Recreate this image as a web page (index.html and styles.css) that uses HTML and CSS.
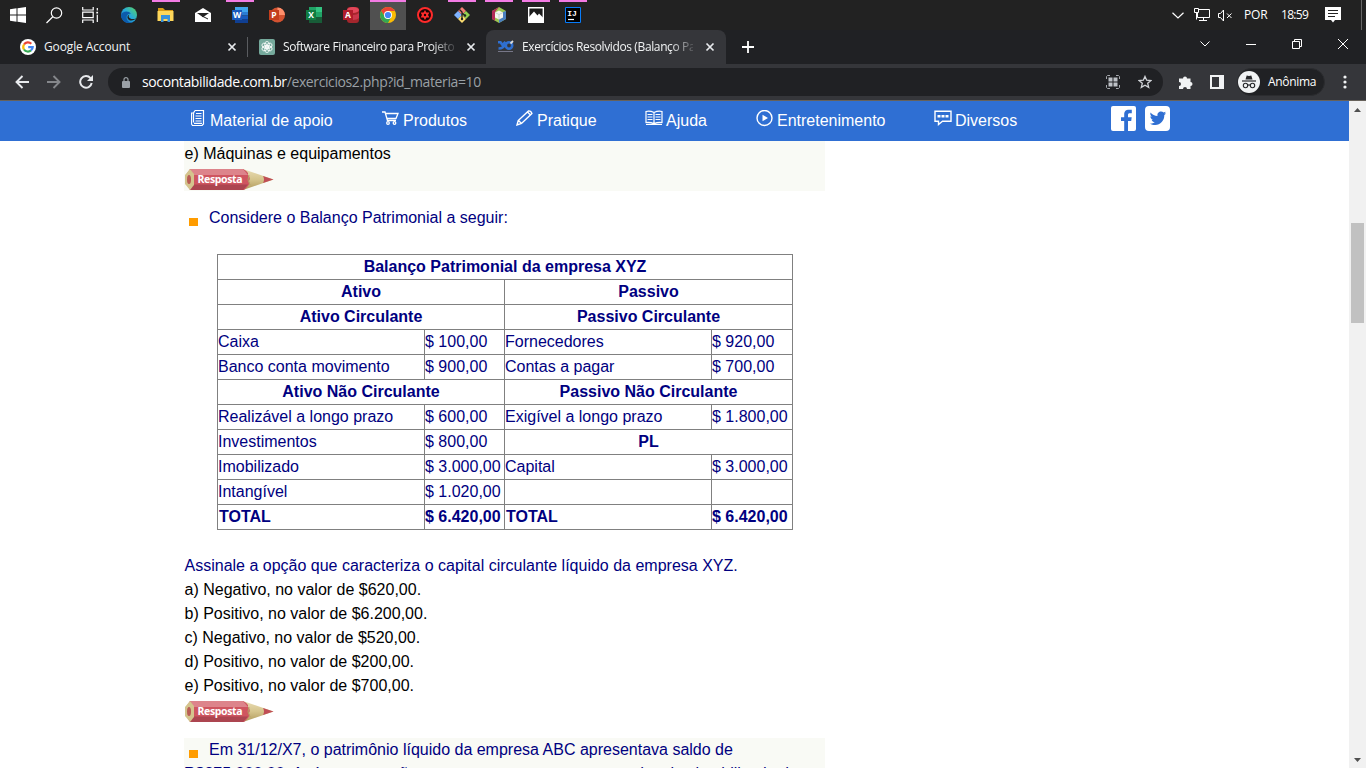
FILE: index.html
```html
<!DOCTYPE html>
<html lang="pt-BR">
<head>
<meta charset="utf-8">
<title>Exercícios Resolvidos (Balanço Patrimonial)</title>
<link rel="stylesheet" href="styles.css">
</head>
<body>
<svg class="defs" width="0" height="0">
  <defs>
    <linearGradient id="edge" x1="0" y1="1" x2="1" y2="0"><stop offset="0" stop-color="#1465b8"/><stop offset=".5" stop-color="#25a9dc"/><stop offset="1" stop-color="#5cd65c"/></linearGradient>
    <linearGradient id="wood" x1="0" y1="0" x2="0" y2="1"><stop offset="0" stop-color="#e9dcb4"/><stop offset=".5" stop-color="#d5c48c"/><stop offset="1" stop-color="#b09a5c"/></linearGradient>
    <symbol id="x" viewBox="0 0 10 10"><path d="M1.500 1.500l7 7M8.500 1.500l-7 7" stroke="#e8eaed" stroke-width="1.700"/></symbol>
    <symbol id="pencil" viewBox="0 0 90 22">
      <path d="M58 0L88.500 10.500 58 21z" fill="url(#wood)"/>
      <path d="M78 7l10.500 3.500-10.500 3.500q2-3.500 0-7z" fill="#c04e56"/>
      <path d="M5 0h53q6 3 5 6 3 3 1 6 2 3-5 9H5L1 14V6z" fill="#cf5560"/>
      <path d="M5 0h53l5 6H9z" fill="#dd848b"/>
      <path d="M8 15.500h55l-5 5.500H5z" fill="#ac4550"/>
      <path d="M5 0L0 6v9l5 6 4-5V5z" fill="#d4c48d"/>
      <ellipse cx="4" cy="10.500" rx="2" ry="4.500" fill="#b95d55"/>
      <path d="M64 6l-1 5 2 5" fill="none" stroke="#b39e62"/>
    </symbol>
  </defs>
</svg>

<header class="taskbar">
  <div class="slot sys"><svg width="16" height="16" viewBox="0 0 16 16"><path d="M0 2.200l6.500-.9v6.200H0zM7.500 1.200L16 0v7.500H7.500zM0 8.500h6.500v6.200L0 13.800zM7.500 8.500H16V16l-8.500-1.200z" fill="#fff"/></svg></div>
  <div class="slot sys"><svg width="17" height="17" viewBox="0 0 17 17" fill="none" stroke="#fff" stroke-width="1.200"><circle cx="10.500" cy="6" r="5.200"/><path d="M6.800 9.800L.5 16"/></svg></div>
  <div class="slot sys"><svg width="17" height="16" viewBox="0 0 17 16" fill="none" stroke="#fff" stroke-width="1.200"><path d="M.7 0v3h10.500V0M.7 16v-3h10.500v3M.7 5.200h10.500v5.500H.7zM15.300 1v14"/><path d="M13.700 4.200h3v3h-3z" fill="#fff" stroke="#222"/></svg></div>
  <div class="slot gap3"><svg width="16" height="16" viewBox="0 0 16 16"><circle cx="8" cy="8" r="8" fill="url(#edge)"/><path d="M0 8c1-4 8-5 10-1-4-1-6 4-3 7 2 2 5 2 7 0-5 5-14 1-14-6z" fill="#0c5bab"/><path d="M8.500 7.500c-2 2 0 5 4 4.500 1.500 0 2.500-.7 3-1.500-2 4-8 4-9 .5-.3-1.600.6-3 2-3.500z" fill="#222"/></svg></div>
  <div class="slot open"><svg width="17" height="16" viewBox="0 0 17 16"><path d="M1 1h5l2 2h8v3H1z" fill="#d99b16"/><path d="M.5 4h16v10H.5z" fill="#ffd75a"/><path d="M4 15V8h9v7h-2.500v-3h-4v3z" fill="#3a92db"/></svg></div>
  <div class="slot"><svg width="16" height="14" viewBox="0 0 16 14"><path d="M0 5l8-5 8 5v9H0z" fill="#fff"/><path d="M2 5h12L8 9.200z" fill="#222"/><path d="M7 8l6 3" stroke="#222"/></svg></div>
  <div class="slot open"><svg width="16" height="16" viewBox="0 0 16 16"><path d="M3 0h13v5H3z" fill="#41a5ee"/><path d="M3 5h13v3.500H3z" fill="#2b7cd3"/><path d="M3 8.500h13V12H3z" fill="#185abd"/><path d="M3 12h13v4H3z" fill="#103f91"/><path d="M0 3h10v10H0z" fill="#185abd"/><text x="5" y="11" class="appletter">W</text></svg></div>
  <div class="slot"><svg width="16" height="16" viewBox="0 0 16 16"><circle cx="8.500" cy="8" r="7.500" fill="#d35230"/><path d="M8.500.5A7.500 7.500 0 0116 8H8.500z" fill="#ff8f6b"/><path d="M0 3h10v10H0z" fill="#c43e1c"/><text x="5" y="11" class="appletter">P</text></svg></div>
  <div class="slot"><svg width="16" height="16" viewBox="0 0 16 16"><path d="M3 0h7v5H3z" fill="#21a366"/><path d="M10 0h6v5h-6z" fill="#33c481"/><path d="M3 5h13v6H3z" fill="#107c41"/><path d="M10 5h6v5h-6z" fill="#21a366"/><path d="M3 10h13v6H3z" fill="#185c37"/><path d="M0 3h10v10H0z" fill="#107c41"/><text x="5" y="11" class="appletter">X</text></svg></div>
  <div class="slot"><svg width="16" height="16" viewBox="0 0 16 16"><rect x="4" width="12" height="16" rx="3" fill="#a4262c"/><ellipse cx="10" cy="3" rx="6" ry="3" fill="#e2475a"/><path d="M10 8q4 0 6-2v5q-2 2-6 2z" fill="#c9364a"/><path d="M0 3h10v10H0z" fill="#b01c2b"/><text x="5" y="11" class="appletter">A</text></svg></div>
  <div class="slot open active"><svg width="16" height="16" viewBox="0 0 16 16"><circle cx="8" cy="8" r="8" fill="#fbbc05"/><path d="M1.100 4A8 8 0 0114.900 4H8L5 9.500z" fill="#ea4335"/><path d="M1.100 4A8 8 0 008 16l3.400-6-5.900.5z" fill="#34a853"/><circle cx="8" cy="8" r="4" fill="#fff"/><circle cx="8" cy="8" r="3.100" fill="#4285f4"/></svg></div>
  <div class="slot"><svg width="16" height="16" viewBox="0 0 16 16"><circle cx="8" cy="8" r="7" fill="#180505" stroke="#ff2b2b" stroke-width="2"/><path d="M8 3l1.400 2.500 3-.1L11 8l1.400 2.600-3-.1L8 13l-1.400-2.500-3 .1L5 8 3.600 5.400l3 .1z" fill="#ff2b2b"/><circle cx="8" cy="8" r="1.200" fill="#180505"/></svg></div>
  <div class="slot open"><svg width="16" height="16" viewBox="0 0 16 16"><path d="M8 0l4 4-4 4-4-4z" fill="#f27e74"/><path d="M4 4l4 4-4 4-4-4z" fill="#80b3ff"/><path d="M12 4l4 4-4 4-4-4z" fill="#92d050"/><path d="M8 8l4 4-4 4-4-4z" fill="#ffe071"/><path d="M5.500 2.500L8 5v7M8 6l3.500 3" fill="none" stroke="#222" stroke-width="1.300"/><circle cx="8" cy="12" r="1.200" fill="#222"/><circle cx="11" cy="8.500" r="1.200" fill="#222"/></svg></div>
  <div class="slot open"><svg width="16" height="16" viewBox="0 0 16 16"><path d="M8 0l7 4v8l-7 4-7-4V4z" fill="#9cc653"/><path d="M8 0L1 4v8l3 1.700V5z" fill="#b32a58"/><path d="M15 4v8l-7 4v-4l4-2V5z" fill="#4a7fc0"/><path d="M8 3.500l4 2v5l-4 2-4-2v-5z" fill="#f6f6ee"/><path d="M4 5.500l4 2 4-2M8 7.500v5" fill="none" stroke="#bcc" stroke-width=".8"/></svg></div>
  <div class="slot open"><svg width="16" height="16" viewBox="0 0 16 16"><path d="M.7.700h14.600v14.600H.7z" fill="#1b1b1b" stroke="#fff" stroke-width="1.400"/><path d="M1 10l5-5.500 3.500 4L11 6.500l4 4V15H1z" fill="#fff"/></svg></div>
  <div class="slot open"><svg width="16" height="16" viewBox="0 0 16 16"><path d="M.5.500h15v15H.5z" fill="#000" stroke="#087cfa"/><text x="7" y="9" class="ij">IJ</text><path d="M3 12.500h6" stroke="#fff" stroke-width="1.200"/></svg></div>
  <div class="tray">
    <svg class="t-chev" width="12" height="7" viewBox="0 0 12 7" fill="none" stroke="#fff" stroke-width="1.200"><path d="M.5.700L6 6 11.500.7"/></svg>
    <svg class="t-net" width="16" height="14" viewBox="0 0 16 14" fill="none" stroke="#fff"><path d="M5 1.500h10.500v8H3.500V5M9.500 9.500v3M5 12.500h8M.5.500h4v4h-4zM2.500 4.500v7"/></svg>
    <svg class="t-vol" width="15" height="13" viewBox="0 0 15 13" fill="none" stroke="#fff"><path d="M.5 4.500h2l3-3.500v11l-3-3.500h-2zM9 4.500l4.500 4.500M13.500 4.500L9 9"/></svg>
    <span class="lang">POR</span><span class="clock">18:59</span>
    <svg class="t-note" width="16" height="16" viewBox="0 0 16 16"><path d="M0 0h16v13h-6l-2 2.500L6 13H0z" fill="#fff"/><path d="M3 3.500h10M3 6.500h10M3 9.500h7" stroke="#222"/></svg>
  </div>
</header>

<div class="tabs">
  <div class="tab tab1">
    <svg width="16" height="16" viewBox="0 0 16 16"><circle cx="8" cy="8" r="8" fill="#fff"/><g fill="none" stroke-width="2.200"><path d="M4 5.500A4.700 4.700 0 0111.300 4.800" stroke="#ea4335"/><path d="M4 5.500a4.700 4.700 0 000 5" stroke="#fbbc05"/><path d="M4 10.500a4.700 4.700 0 007 .9" stroke="#34a853"/><path d="M11 11.400q1.600-1.300 1.700-3.200H8.200" stroke="#4285f4"/></g></svg>
    <span class="title">Google Account</span><svg class="close" width="10" height="10"><use href="#x"/></svg>
  </div>
  <div class="tab tab2">
    <svg width="16" height="16" viewBox="0 0 16 16"><rect width="16" height="16" rx="2" fill="#75a99c"/><g fill="none" stroke="#fff" stroke-width=".8"><ellipse cx="8" cy="5.800" rx="2.300" ry="3.400"/><ellipse cx="8" cy="5.800" rx="2.300" ry="3.400" transform="rotate(60 8 8)"/><ellipse cx="8" cy="5.800" rx="2.300" ry="3.400" transform="rotate(120 8 8)"/><ellipse cx="8" cy="5.800" rx="2.300" ry="3.400" transform="rotate(180 8 8)"/><ellipse cx="8" cy="5.800" rx="2.300" ry="3.400" transform="rotate(240 8 8)"/><ellipse cx="8" cy="5.800" rx="2.300" ry="3.400" transform="rotate(300 8 8)"/></g></svg>
    <span class="title fade">Software Financeiro para Projeto</span><svg class="close" width="10" height="10"><use href="#x"/></svg>
  </div>
  <div class="tab tab3">
    <svg width="16" height="16" viewBox="0 0 16 16" fill="none" stroke="#2f6fd0" stroke-width="2.600"><path d="M0 3.300h2.500l2 2.700 3-3.200M7 5.500c-1 2.500-3 4-6.500 4"/><circle cx="11" cy="6.500" r="3.200"/><path d="M12.500 4.500l2.500-2.500" stroke="#ddd" stroke-width="1.800"/><path d="M0 12.500h15" stroke="#778" stroke-width="1"/></svg>
    <span class="title fade">Exercícios Resolvidos (Balanço Pa</span><svg class="close" width="10" height="10"><use href="#x"/></svg>
  </div>
  <svg class="plus" width="12" height="12" viewBox="0 0 12 12"><path d="M6 0v12M0 6h12" stroke="#fff" stroke-width="1.800"/></svg>
  <div class="wincontrols">
    <span><svg width="10" height="6" viewBox="0 0 10 6" fill="none" stroke="#fff"><path d="M.5.500L5 5 9.500.5"/></svg></span>
    <span><svg width="10" height="1"><path d="M0 .5h10" stroke="#fff"/></svg></span>
    <span><svg width="10" height="10" viewBox="0 0 10 10" fill="none" stroke="#fff"><path d="M.5 2.500h7v7h-7zM2.500 2V.5h7v7H8"/></svg></span>
    <span><svg width="10" height="10" viewBox="0 0 10 10" stroke="#fff"><path d="M0 0l10 10M10 0L0 10"/></svg></span>
  </div>
</div>

<div class="toolbar">
  <span class="btn"><svg width="14" height="14" viewBox="0 0 14 14" fill="none" stroke="#e8eaed" stroke-width="1.900"><path d="M14 7H1.500M7.500 1l-6 6 6 6"/></svg></span>
  <span class="btn"><svg width="14" height="14" viewBox="0 0 14 14" fill="none" stroke="#85878b" stroke-width="1.900"><path d="M0 7h12.500M6.500 1l6 6-6 6"/></svg></span>
  <span class="btn"><svg width="14" height="14" viewBox="0 0 14 14" fill="none" stroke="#e8eaed" stroke-width="2"><path d="M11.500 3.200A5.800 5.800 0 1012.700 8"/><path d="M14 0v6H8z" fill="#e8eaed" stroke="none"/></svg></span>
  <div class="omnibox">
    <svg class="lock" width="8" height="11" viewBox="0 0 8 11"><rect y="4" width="8" height="7" rx="1" fill="#9aa0a6"/><path d="M2 4.500V2.600a2 2 0 014 0v1.900" fill="none" stroke="#9aa0a6" stroke-width="1.200"/></svg>
    <span class="url">socontabilidade.com.br<span class="path">/exercicios2.php?id_materia=10</span></span>
    <svg class="qr" width="14" height="14" viewBox="0 0 14 14" fill="none" stroke="#a5a8ad"><path d="M4 .5H1.500L.5 1.500V4M10 .5h2.500l1 1V4M4 13.500H1.500l-1-1V10M10 13.500h2.500l1-1V10"/><path d="M2.500 2.500h4v4h-4zM7.500 2.500h4v4h-4zM2.500 7.500h4v4h-4zM7.500 7.500h4v4h-4z" fill="#bdc1c6" stroke="none"/></svg>
    <svg class="star" width="14" height="14" viewBox="0 0 14 14"><path d="M7 1.400l1.700 3.800 4.200.4-3.200 2.700 1 4.100L7 10.200l-3.700 2.200 1-4.100L1.100 5.600l4.200-.4z" fill="none" stroke="#d0d3d7" stroke-width="1.300"/></svg>
  </div>
  <svg class="puzzle" width="15" height="15" viewBox="0 0 15 15"><path d="M1 3.500h4a2 2 0 114 0h3.500v3.500a2 2 0 110 4v3H9a2 2 0 00-4 0H1V11a2 2 0 000-4z" fill="#f1f3f4"/></svg>
  <svg class="panel" width="14" height="14" viewBox="0 0 14 14"><path d="M0 0h14v14H0zM2 2v10h7V2z" fill="#f1f3f4" fill-rule="evenodd"/></svg>
  <div class="incognito"><svg width="22" height="22" viewBox="0 0 22 22"><circle cx="11" cy="11" r="11" fill="#f1f3f4"/><path d="M7.500 8.500l1.200-4 2.300.6 2.300-.6 1.200 4z" fill="#27282b"/><path d="M4 10h14" stroke="#27282b" stroke-width="1.200"/><g fill="none" stroke="#27282b" stroke-width="1.100"><circle cx="7.500" cy="14.500" r="2.200"/><circle cx="14.500" cy="14.500" r="2.200"/><path d="M9.700 14.200q1.300-.7 2.600 0"/></g></svg><span>Anônima</span></div>
  <svg class="dots" width="4" height="14" viewBox="0 0 4 14" fill="#f1f3f4"><circle cx="2" cy="2" r="1.600"/><circle cx="2" cy="7" r="1.600"/><circle cx="2" cy="12" r="1.600"/></svg>
</div>

<div class="viewport">
  <div class="page">
    <nav class="menu">
      <a class="m1"><svg width="14" height="16" viewBox="0 0 14 16" fill="none" stroke="#fff"><path d="M4 .5h8.500v12M4 .5L2.500 3v9.500M2.500 3H.5v11l1 1.500H11l1.500-1.500v-2M5 3.500h5.500M4.500 6h6M4.500 8.500h6M4.500 11h6M3 13.300h8" stroke-width="1.200"/></svg><span>Material de apoio</span></a>
      <a class="m2"><svg width="17" height="16" viewBox="0 0 17 16" fill="none" stroke="#fff" stroke-width="1.300"><path d="M0 2h3l2.500 8.500h8.500M3.500 3.500h12.500l-2 5H5"/><circle cx="6" cy="13" r="1.300"/><circle cx="12.500" cy="13" r="1.300"/></svg><span>Produtos</span></a>
      <a class="m3"><svg width="17" height="16" viewBox="0 0 17 16" fill="none" stroke="#fff" stroke-width="1.400"><path d="M1 15l1.200-4.500L12.500.9q2.500-.2 3.400 2.600L5.500 13.500zM2.500 10.500l3 3M11.500 2l3 3"/></svg><span>Pratique</span></a>
      <a class="m4"><svg width="18" height="16" viewBox="0 0 18 16" fill="none" stroke="#fff" stroke-width="1.200"><path d="M9 2.500Q5 .6 1 1.500v11q4-.6 8 1 4-1.600 8-1v-11q-4-.9-8 1zM9 2.500v11M2.500 4.500h5M2.500 7h5M2.500 9.500h5M10.500 4.500h5M10.500 7h5M10.500 9.500h5M1 14.300h16"/></svg><span>Ajuda</span></a>
      <a class="m5"><svg width="17" height="17" viewBox="0 0 17 17"><circle cx="8.500" cy="8" r="7.500" fill="none" stroke="#fff" stroke-width="1.400"/><path d="M6.500 4.800L12 8l-5.500 3.200z" fill="#fff"/></svg><span>Entretenimento</span></a>
      <a class="m6"><svg width="18" height="16" viewBox="0 0 18 16" fill="none" stroke="#fff" stroke-width="1.400"><path d="M1 1.200h16v10H8.500L4.500 14.500v-3.300H1z"/><path d="M3.500 6.200h11" stroke-width="2.400" stroke-dasharray="3 1"/></svg><span>Diversos</span></a>
      <div class="social">
        <svg width="25" height="25" viewBox="0 0 25 25"><rect width="25" height="25" rx="2" fill="#fff"/><path d="M13.200 25V15H10v-3.800h3.200V8.500c0-3.500 2-4.800 4.600-4.800h3v3.600h-2c-1.300 0-1.800.5-1.800 1.800v2.100h3.700L20.200 15H17v10z" fill="#2f6fd3"/></svg>
        <svg width="25" height="25" viewBox="0 0 25 25"><rect width="25" height="25" rx="4" fill="#fff"/><path d="M5.500 6.500c1.900 2.200 4.200 3.400 7 3.500C12 7 14 5.500 16 5.500c1 0 1.900.4 2.600 1.100l2-.8c-.2.900-.7 1.500-1.400 2l1.800-.5c-.4.700-1 1.300-1.700 1.800.2 5.500-4 10-9 10-2 0-3.900-.5-5.500-1.500 1.900.2 3.500-.3 5-1.400-1.500-.1-2.700-1-3.200-2.400h1.500c-1.700-.5-2.700-1.800-2.700-3.500l1.500.4C5.400 9.600 5 8 5.500 6.500z" fill="#2f6fd3"/></svg>
      </div>
    </nav>
    <main>
      <section class="shade first">
        <p class="answer">e) Máquinas e equipamentos</p>
        <div class="resposta"><svg width="90" height="22"><use href="#pencil"/><text x="12.500" y="14.400" textLength="45">Resposta</text></svg></div>
      </section>
      <section class="question">
        <p class="lead"><i class="bullet"></i>Considere o Balanço Patrimonial a seguir:</p>
        <table>
          <colgroup><col class="c1"><col class="c2"><col class="c3"><col class="c4"></colgroup>
          <tr><th colspan="4">Balanço Patrimonial da empresa XYZ</th></tr>
          <tr><th colspan="2">Ativo</th><th colspan="2">Passivo</th></tr>
          <tr><th colspan="2">Ativo Circulante</th><th colspan="2">Passivo Circulante</th></tr>
          <tr><td>Caixa</td><td>$ 100,00</td><td>Fornecedores</td><td>$ 920,00</td></tr>
          <tr><td>Banco conta movimento</td><td>$ 900,00</td><td>Contas a pagar</td><td>$ 700,00</td></tr>
          <tr><th colspan="2">Ativo Não Circulante</th><th colspan="2">Passivo Não Circulante</th></tr>
          <tr><td>Realizável a longo prazo</td><td>$ 600,00</td><td>Exigível a longo prazo</td><td>$ 1.800,00</td></tr>
          <tr><td>Investimentos</td><td>$ 800,00</td><th colspan="2">PL</th></tr>
          <tr><td>Imobilizado</td><td>$ 3.000,00</td><td>Capital</td><td>$ 3.000,00</td></tr>
          <tr><td>Intangível</td><td>$ 1.020,00</td><td></td><td></td></tr>
          <tr class="total"><td>TOTAL</td><td>$ 6.420,00</td><td>TOTAL</td><td>$ 6.420,00</td></tr>
        </table>
        <p class="blue">Assinale a opção que caracteriza o capital circulante líquido da empresa XYZ.</p>
        <p class="answer">a) Negativo, no valor de $620,00.</p>
        <p class="answer">b) Positivo, no valor de $6.200,00.</p>
        <p class="answer">c) Negativo, no valor de $520,00.</p>
        <p class="answer">d) Positivo, no valor de $200,00.</p>
        <p class="answer">e) Positivo, no valor de $700,00.</p>
        <div class="resposta"><svg width="90" height="22"><use href="#pencil"/><text x="12.500" y="14.400" textLength="45">Resposta</text></svg></div>
      </section>
      <section class="shade last">
        <p class="lead"><i class="bullet"></i>Em 31/12/X7, o patrimônio líquido da empresa ABC apresentava saldo de<br>R$275.000,00. Após a transação, ocorreu apenas um aumento do ativo imobilizado da</p>
      </section>
    </main>
  </div>
  <div class="scrollbar">
    <svg width="7" height="4" viewBox="0 0 7 4"><path d="M0 4l3.500-4L7 4z" fill="#505050"/></svg>
    <div class="thumb"></div>
    <svg class="down" width="7" height="4" viewBox="0 0 7 4"><path d="M0 0l3.500 4L7 0z" fill="#505050"/></svg>
  </div>
</div>
</body>
</html>
```
FILE: styles.css
```css
* { box-sizing: border-box; }
body { margin: 0; width: 1366px; height: 768px; overflow: hidden; background: #fff; font-family: "Liberation Sans", Arial, sans-serif; font-size: 16px; }
svg { flex: none; display: block; }
.defs { position: absolute; }
p { margin: 0; }

.taskbar { height: 30px; background: #222; display: flex; color: #fff; font: 12px "Open Sans", sans-serif; }
.slot { width: 37px; height: 30px; flex: none; display: flex; align-items: center; justify-content: center; }
.slot.sys { width: 36px; }
.slot.gap3 { margin-left: 2px; }
.slot.open { background: linear-gradient(#f37be4, #f37be4) 5px 0 / 28px 2px no-repeat; }
.slot.active { width: 36px; margin-left: 1px; background: linear-gradient(#f37be4, #f37be4) 0 0 / 36px 2px no-repeat #505050; }
.appletter { font: bold 8.500px "Open Sans", sans-serif; fill: #fff; text-anchor: middle; }
.ij { font: bold 8px "Liberation Mono", monospace; fill: #fff; text-anchor: middle; }
.tray { flex: 1; display: flex; align-items: center; justify-content: flex-end; padding-right: 20px; border-right: 1px solid #666; margin-right: 4px; }
.t-net { margin-left: 10px; margin-right: 8px; }
.lang { width: 24px; margin-left: 11px; letter-spacing: -.2px; line-height: 14px; padding-bottom: 1px; }
.clock { width: 31px; margin-left: 13px; margin-right: 13px; letter-spacing: -.7px; line-height: 14px; padding-bottom: 1px; white-space: nowrap; }

.tabs { height: 34px; background: #202124; display: flex; align-items: center; color: #f1f3f4; font: 12px "Open Sans", sans-serif; }
.tab { height: 34px; display: flex; align-items: center; flex: none; }
.tab .title { margin-left: 8px; padding-bottom: 1px; white-space: nowrap; flex: 1; min-width: 0; letter-spacing: -.12px; }
.tab .title.fade { letter-spacing: -.38px; -webkit-mask-image: linear-gradient(90deg, #000 148px, transparent 176px); mask-image: linear-gradient(90deg, #000 148px, transparent 176px); }
.tab1 { width: 248px; padding: 0 11px 0 20px; background: linear-gradient(#5a5c60, #5a5c60) right 7px / 1px 20px no-repeat; }
.tab2 { width: 238px; padding: 0 10px 0 11px; }
.tab3 { width: 240px; padding: 0 11px 0 12px; background: #35363a; border-radius: 8px 8px 0 0; }
.close { margin-left: 12px; }
.plus { margin-left: 16px; }
.wincontrols { margin-left: auto; display: flex; height: 28px; align-self: flex-start; }
.wincontrols span { width: 46px; display: flex; align-items: center; justify-content: center; }

.toolbar { height: 37px; background: #35363a; border-bottom: 1px solid #66615a; display: flex; align-items: center; padding-left: 6px; }
.btn { width: 32px; display: flex; justify-content: center; }
.omnibox { width: 1055px; height: 28px; margin-left: 6px; border-radius: 14px; background: #202124; display: flex; align-items: center; padding: 0 11px 0 14px; }
.url { margin-left: 12px; padding-bottom: 1px; flex: 1; font: 14px "Open Sans", sans-serif; color: #fff; white-space: nowrap; letter-spacing: -.39px; }
.path { color: #9aa0a6; }
.qr { margin-right: 18px; }
.puzzle { margin-left: 15px; }
.panel { margin-left: 17px; }
.incognito { width: 88px; height: 28px; margin-left: 13px; border-radius: 14px; background: #202124; border: 1px solid #2b2c2f; display: flex; align-items: center; gap: 8px; color: #fff; font: 12px "Open Sans", sans-serif; letter-spacing: -.3px; }
.incognito span { padding-bottom: 1px; }
.dots { margin-left: 18px; }

.viewport { height: 667px; display: flex; overflow: hidden; }
.page { width: 1349px; height: 667px; overflow: hidden; }
.menu { height: 40px; background: #2f6fd3; color: #fff; display: flex; align-items: flex-start; padding: 5px 0 0 191px; }
.menu a { display: flex; flex: none; gap: 5px; padding-top: 4px; line-height: 22px; white-space: nowrap; }
.m1 { width: 191px; }
.m2 { width: 134px; }
.menu .m2, .menu .m3 { gap: 4px; }
.m3 { width: 129px; }
.m4 { width: 111px; }
.menu .m4, .menu .m6 { gap: 3px; }
.menu .m5 { gap: 4px; }
.m5 { width: 178px; }
.m6 { width: 177px; }
.social { display: flex; gap: 9px; }

main { width: 641px; margin-left: 184px; }
.shade { background: #f9faf5; }
.first { height: 50px; padding-top: 1px; }
.answer, .blue, .lead { line-height: 24px; white-space: nowrap; }
.answer, .blue { padding-left: .5px; }
.blue, .lead, table { color: #000080; }
.resposta { padding: 3px 0 0 .5px; }
.resposta text { font: bold 10.500px "Open Sans", sans-serif; fill: #fff; }
.question { padding-top: 15px; height: 547px; }
.bullet { display: inline-block; width: 9px; height: 8px; margin: 0 11px 0 5px; background: #ff9c00; vertical-align: -3px; }
table { margin: 24px 0 24px 33px; width: 575px; table-layout: fixed; border-collapse: collapse; }
.c1, .c3 { width: 207px; }
.c2 { width: 80px; }
.c4 { width: 81px; }
td, th { border: 1px solid #808080; padding: 0; height: 25px; line-height: 24px; white-space: nowrap; }
.total { font-weight: bold; }
.total td:nth-child(odd) { padding-left: 1px; }

.scrollbar { width: 17px; background: #f1f1f1; display: flex; flex-direction: column; align-items: center; padding: 7px 0 6px; }
.thumb { width: 13px; height: 100px; margin-top: 111px; background: #c1c1c1; }
.down { margin-top: auto; }
```
